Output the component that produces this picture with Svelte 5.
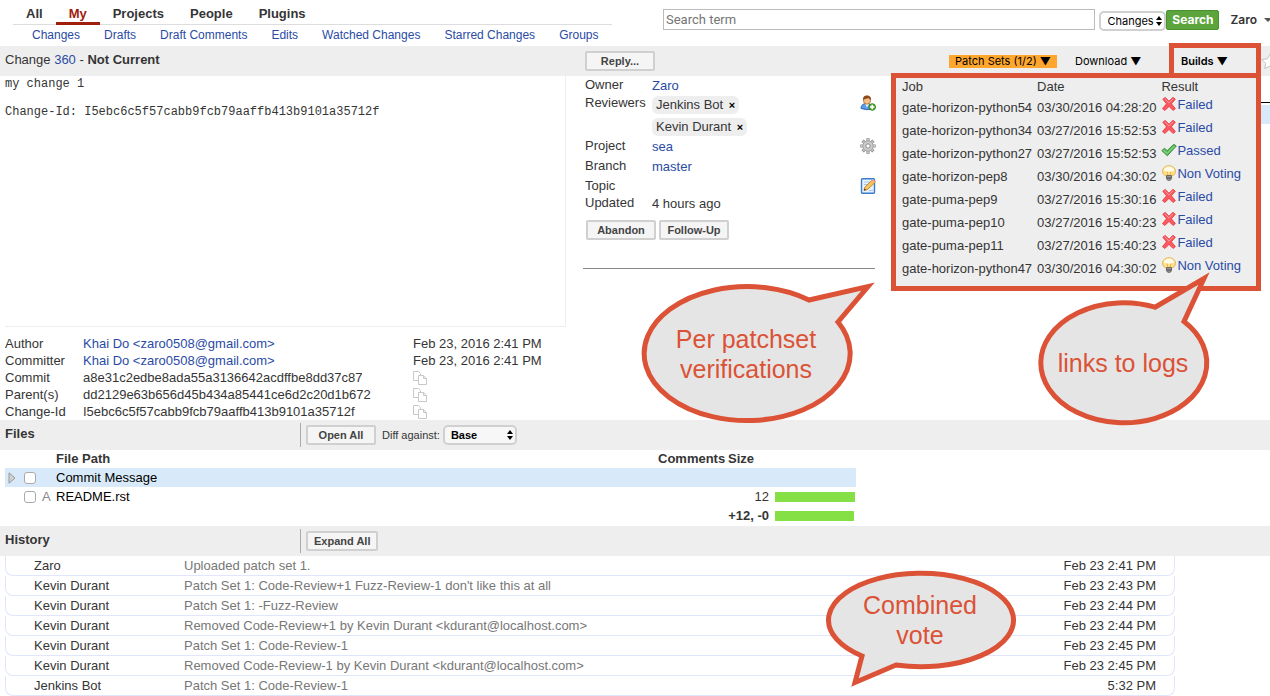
<script>
  const tabs = ['All', 'My', 'Projects', 'People', 'Plugins'];
  const links = ['Changes', 'Drafts', 'Draft Comments', 'Edits', 'Watched Changes', 'Starred Changes', 'Groups'];
  const commit = [
    { label: 'Author', value: 'Khai Do <zaro0508@gmail.com>', date: 'Feb 23, 2016 2:41 PM' },
    { label: 'Committer', value: 'Khai Do <zaro0508@gmail.com>', date: 'Feb 23, 2016 2:41 PM' },
    { label: 'Commit', value: 'a8e31c2edbe8ada55a3136642acdffbe8dd37c87' },
    { label: 'Parent(s)', value: 'dd2129e63b656d45b434a85441ce6d2c20d1b672' },
    { label: 'Change-Id', value: 'I5ebc6c5f57cabb9fcb79aaffb413b9101a35712f' }
  ];
  const builds = [
    { job: 'gate-horizon-python54', date: '03/30/2016 04:28:20', result: 'Failed' },
    { job: 'gate-horizon-python34', date: '03/27/2016 15:52:53', result: 'Failed' },
    { job: 'gate-horizon-python27', date: '03/27/2016 15:52:53', result: 'Passed' },
    { job: 'gate-horizon-pep8', date: '03/30/2016 04:30:02', result: 'Non Voting' },
    { job: 'gate-puma-pep9', date: '03/27/2016 15:30:16', result: 'Failed' },
    { job: 'gate-puma-pep10', date: '03/27/2016 15:40:23', result: 'Failed' },
    { job: 'gate-puma-pep11', date: '03/27/2016 15:40:23', result: 'Failed' },
    { job: 'gate-horizon-python47', date: '03/30/2016 04:30:02', result: 'Non Voting' }
  ];
  const history = [
    { who: 'Zaro', text: 'Uploaded patch set 1.', date: 'Feb 23 2:41 PM' },
    { who: 'Kevin Durant', text: "Patch Set 1: Code-Review+1 Fuzz-Review-1 don't like this at all", date: 'Feb 23 2:43 PM' },
    { who: 'Kevin Durant', text: 'Patch Set 1: -Fuzz-Review', date: 'Feb 23 2:44 PM' },
    { who: 'Kevin Durant', text: 'Removed Code-Review+1 by Kevin Durant <kdurant@localhost.com>', date: 'Feb 23 2:44 PM' },
    { who: 'Kevin Durant', text: 'Patch Set 1: Code-Review-1', date: 'Feb 23 2:45 PM' },
    { who: 'Kevin Durant', text: 'Removed Code-Review-1 by Kevin Durant <kdurant@localhost.com>', date: 'Feb 23 2:45 PM' },
    { who: 'Jenkins Bot', text: 'Patch Set 1: Code-Review-1', date: '5:32 PM' }
  ];
  const message = 'my change 1\n\nChange-Id: I5ebc6c5f57cabb9fcb79aaffb413b9101a35712f';
</script>

{#snippet updown()}
  <svg class="updown" width="6" height="10" viewBox="0 0 6 10" aria-hidden="true">
    <path d="M3 0 6 4H0ZM0 6h6L3 10Z" fill="#000" />
  </svg>
{/snippet}

{#snippet resultIcon(result)}
  {#if result === 'Failed'}
    <svg width="16" height="16" viewBox="0 0 16 16" aria-hidden="true">
      <path d="M1.8 3.2 4.2 1.4 8 5.2 12 1.3l2.3 1.9L10.4 7.8l4 4.8-2.3 1.9-4.1-4.1-4.1 4.1-2.4-1.9 4-4.8Z" fill="#fb5a60" stroke="#e5313b" stroke-width=".8" stroke-linejoin="round" />
      <path d="m3.8 2.8 4.1 4.1L12.2 2.800" fill="none" stroke="#ff9a9a" stroke-width="1" />
    </svg>
  {:else if result === 'Passed'}
    <svg width="16" height="16" viewBox="0 0 16 16" aria-hidden="true">
      <path d="M.8 8.6 3.6 6.2 6.1 8.700 12.8 2.300 15.300 4 6.3 13.8Z" fill="#5cb85a" stroke="#2e8b3a" stroke-width=".9" stroke-linejoin="round" />
      <path d="m2.4 8.4 3.8 3L13.4 4" fill="none" stroke="#9be08f" stroke-width="1" />
    </svg>
  {:else}
    <svg width="16" height="16" viewBox="0 0 16 16" aria-hidden="true">
      <ellipse cx="8" cy="6.2" rx="6.5" ry="5.500" fill="#ffe08c" stroke="#dfb04a" stroke-width=".9" />
      <path d="M2.800 5.500a5.200 4 0 0 1 10.400 0Q8 8 2.800 5.500Z" fill="#fffbe6" />
      <path d="m6 6.500 1 4h2l1-4" fill="none" stroke="#e3a83c" stroke-width=".8" />
      <path d="M5.500 10.500h5v3.200l-1.200 1.600H6.700l-1.200-1.600Z" fill="#b7b7b7" stroke="#555" stroke-width=".8" />
      <path d="M5.500 12.200h5M6 13.800h4" stroke="#444" stroke-width=".9" />
    </svg>
  {/if}
{/snippet}

<div class="page">
  <header class="top">
    <nav>
      <div class="tabs">
        {#each tabs as tab}<a href="#{tab}" class:active={tab === 'My'}>{tab}</a>{/each}
      </div>
      <div class="links">
        {#each links as link}<a href="#{link}">{link}</a>{/each}
      </div>
    </nav>
    <form class="search">
      <input type="text" placeholder="Search term" aria-label="Search term" />
      <span class="select scope">
        <select aria-label="Search in"><option>Changes</option></select>
        {@render updown()}
      </span>
      <button type="button" class="go">Search</button>
      <a class="user" href="#account">Zaro</a>
      <svg width="6" height="6" viewBox="0 0 6 6" aria-hidden="true"><path d="M0 1h8L4 5Z" fill="#555" /></svg>
    </form>
  </header>

  <div class="bar title">
    <h1>Change <a href="#360">360</a> - <b>Not Current</b></h1>
    <div class="reply"><button class="btn">Reply...</button></div>
    <div class="menus">
      <button class="menu sets">Patch Sets (1/2) ▼</button>
      <button class="menu download">Download ▼</button>
      <div class="builds-wrap">
        <button class="menu builds">Builds ▼</button>
        <div class="popup">
          <table>
            <thead><tr><th>Job</th><th>Date</th><th>Result</th></tr></thead>
            <tbody>
              {#each builds as b}
                <tr>
                  <td>{b.job}</td>
                  <td>{b.date}</td>
                  <td><div class="result">{@render resultIcon(b.result)}<a href="#log">{b.result}</a></div></td>
                </tr>
              {/each}
            </tbody>
          </table>
        </div>
      </div>
      <svg width="9" height="16" viewBox="0 0 9 16" aria-hidden="true">
        <path d="M9 1 6.5 5.8.7 6.5l4 4L3.6 15.5 9 13" fill="#fff" stroke="#c4c4c4" />
      </svg>
    </div>
  </div>

  <main class="change">
    <section>
      <pre>{message}</pre>
      <dl class="commit">
        {#each commit as c}
          <div>
            <dt>{c.label}</dt>
            <dd>{#if c.date}<a href="#person">{c.value}</a>{:else}{c.value}{/if}</dd>
            <dd>
              {#if c.date}{c.date}{:else}
                <svg width="14" height="14" viewBox="0 0 14 14" aria-label="Copy">
                  <path d="M.5.5h5l2 2v7h-7Z" fill="#fff" stroke="#c8c8c8" />
                  <path d="M5.5 4.5h5l3 3v6h-8Z" fill="#fff" stroke="#c8c8c8" />
                  <path d="M10.5 4.5v3h3" fill="none" stroke="#c8c8c8" />
                </svg>
              {/if}
            </dd>
          </div>
        {/each}
      </dl>
    </section>

    <section class="info">
      <div class="row owner"><span>Owner</span><span class="val"><a href="#zaro">Zaro</a></span></div>
      <div class="row reviewers">
        <span>Reviewers</span>
        <span class="chips">
          <span class="chip">Jenkins Bot <button aria-label="Remove Jenkins Bot">×</button></span>
          <span class="chip">Kevin Durant <button aria-label="Remove Kevin Durant">×</button></span>
        </span>
        <svg width="16" height="16" viewBox="0 0 16 16" aria-hidden="true">
          <path d="M1 13.5C1 9.8 3.7 8.5 7 8.5s5 2 5 5.5q-5 1.500-11-.5Z" fill="#5d9ce8" stroke="#2f66b5" />
          <path d="M5.3 9 7 12.5 9 9Z" fill="#eef6ff" />
          <ellipse cx="7" cy="5.2" rx="3.6" ry="4" fill="#f3c08c" stroke="#a86b33" stroke-width=".8" />
          <path d="M3.2 5C2.6 1.8 4.6.4 7.1.4S11.4 2 10.8 5C9.4 4.6 9 3.4 8.6 3 7.4 4 5 3.6 3.2 5Z" fill="#8d4a1c" />
          <circle cx="12.200" cy="12" r="3.3" fill="#58ad3a" stroke="#2f7d1e" stroke-width=".9" />
          <path d="M12.200 9.8v4.4M10 12h4.4" stroke="#fff" stroke-width="1.5" />
        </svg>
      </div>
      <div class="row wide">
        <span>Project</span><span class="val"><a href="#sea">sea</a></span>
        <svg width="16" height="16" viewBox="0 0 16 16" aria-hidden="true">
          <g stroke="#8a8a8a" stroke-width="3.2"><path d="M8 .3v15.4M.3 8h15.4M2.6 2.6l10.8 10.8M13.4 2.6 2.6 13.4" /></g>
          <g stroke="#c9c9c9" stroke-width="2"><path d="M8 1v14M1 8h14M3.1 3.1l9.8 9.8M12.9 3.1l-9.8 9.8" /></g>
          <circle cx="8" cy="8" r="5.2" fill="#ccc" stroke="#999" stroke-width=".8" />
          <circle cx="8" cy="8" r="2.2" fill="#fff" stroke="#8a8a8a" />
        </svg>
      </div>
      <div class="row wide"><span>Branch</span><span class="val"><a href="#master">master</a></span></div>
      <div class="row topic">
        <span>Topic</span><span></span>
        <svg width="16" height="16" viewBox="0 0 16 16" aria-hidden="true">
          <rect x="1.5" y=".8" width="13" height="14.4" rx="1" fill="#e6f2ff" stroke="#3b7cc9" stroke-width="1.4" />
          <path d="M4 4h6M4 6.5h4M9 12.5h4" stroke="#a5c8ee" />
          <path d="m4 12.5.8-3.4 7-6.7q1.8-.8 3.2 2l-7.3 7Z" fill="#f6c45c" stroke="#b57a22" stroke-width=".8" />
          <path d="m4 12.5.5-2 1.7 1.5Z" fill="#333" />
          <path d="m11.8 2.4 3 2.3 1-1.2-2.4-2.2Z" fill="#ef9a86" />
        </svg>
      </div>
      <div class="row wide"><span>Updated</span><span class="val">4 hours ago</span></div>
      <div class="actions"><button class="btn">Abandon</button><button class="btn">Follow-Up</button></div>
      <hr />
    </section>

    <aside><div class="line"></div><div class="selected"></div></aside>
  </main>

  <div class="bar">
    <h2>Files</h2>
    <div class="tools">
      <button class="btn">Open All</button>
      <label for="base">Diff against:</label>
      <span class="select base"><select id="base"><option>Base</option></select>{@render updown()}</span>
    </div>
  </div>

  <table class="files">
    <colgroup><col class="c1" /><col class="c2" /><col class="c3" /><col /><col class="c5" /><col class="c6" /><col class="c7" /></colgroup>
    <thead>
      <tr><th></th><th></th><th></th><th>File Path</th><th>Comments</th><th>Size</th><th></th></tr>
    </thead>
    <tbody>
      <tr class="on">
        <td><svg width="8" height="12" viewBox="0 0 8 12" aria-hidden="true"><path d="M1 .8 7 6 1 11.2Z" fill="#d0d0d0" stroke="#999" /></svg></td>
        <td><input type="checkbox" aria-label="Reviewed: Commit Message" /></td>
        <td></td><td>Commit Message</td><td></td><td></td><td></td>
      </tr>
      <tr>
        <td></td>
        <td><input type="checkbox" aria-label="Reviewed: README.rst" /></td>
        <td class="status">A</td><td>README.rst</td><td></td><td class="num">12</td><td><div class="size"></div></td>
      </tr>
      <tr><td></td><td></td><td></td><td></td><td class="num total" colspan="2">+12, -0</td><td><div class="size short"></div></td></tr>
    </tbody>
  </table>

  <div class="bar">
    <h2>History</h2>
    <div class="tools"><button class="btn">Expand All</button></div>
  </div>

  <ul class="history">
    {#each history as h}
      <li><span>{h.who}</span><span class="text">{h.text}</span><time>{h.date}</time></li>
    {/each}
  </ul>

  <svg class="callout patchset" width="240" height="150" viewBox="640 276 240 150">
    <path d="M838 322A103 67 0 1 1 809 300L868 286.5Z" />
    <text x="746" y="348">Per patchset</text>
    <text x="746" y="378">verifications</text>
  </svg>
  <svg class="callout logs" width="180" height="160" viewBox="1034 268 180 160">
    <path d="M1184 321.5A83 60 0 1 1 1155 307.2L1204 278.5Z" />
    <text x="1123" y="372">links to logs</text>
  </svg>
  <svg class="callout vote" width="200" height="124" viewBox="822 568 200 124">
    <path d="M862 656A92.5 46.7 0 1 1 896 665L855 682.5Z" />
    <text x="920" y="614">Combined</text>
    <text x="920" y="644">vote</text>
  </svg>
</div>

<style>
  :global(body) { margin: 0; background: #fff; }
  .page {
    position: relative;
    overflow: hidden;
    color: #353535;
    font: 13px/17px "Liberation Sans", Arial, sans-serif;
  }
  a { color: #2a4ba5; text-decoration: none; }
  svg { display: block; flex: none; }
  button { font-family: inherit; color: inherit; margin: 0; cursor: pointer; }

  .top { display: flex; height: 46px; justify-content: space-between; }
  nav { margin-left: 13px; flex: 0 0 599px; }
  .tabs { display: flex; height: 25px; box-sizing: border-box; border-bottom: 1px solid #ddd; margin-bottom: 2px; }
  .tabs a { padding: 5px 13px 0; font-weight: bold; color: #353535; height: 17px; }
  .tabs a.active { color: #a0200c; border-bottom: 3px solid #a0200c; }
  .links { display: flex; gap: 24px; padding-left: 19px; font-size: 12px; line-height: 16px; white-space: nowrap; }
  .search { display: flex; flex: 1; align-items: center; margin-left: 51px; height: 39px; font-family: Roboto, sans-serif; }
  .search input {
    flex: 1; min-width: 0; height: 21px; box-sizing: border-box; padding: 0 2px;
    border: 1px solid #bbb; font: 13px Roboto, sans-serif; margin-right: 4px;
  }
  .search input::placeholder { color: #757575; opacity: 1; }
  .select { display: inline-grid; align-items: center; }
  .select select, .select :global(svg) { grid-area: 1 / 1; }
  .select :global(svg) { justify-self: end; margin-right: 4px; pointer-events: none; }
  select {
    appearance: none; box-sizing: border-box; height: 20px; width: 100%; padding: 0 8px; border: 2px solid #d0d0d0;
    border-radius: 5px; background: #f7f7f7; color: #000; font: 11px Inter, sans-serif;
  }
  .scope { width: 67px; margin-top: 3px; }
  .scope select { background: #fff; padding: 0 6px; }
  .go {
    width: 53px; height: 20px; padding: 0; border: 1px solid #4a8f30; border-radius: 2px; background: #5ba53c;
    color: #fff; font: bold 12px Inter, sans-serif;
  }
  .user { margin: 0 7px 0 11px; font: 600 12px Inter, sans-serif; color: #353535; }

  .bar { display: flex; align-items: center; height: 30px; background: #eee; }
  h1, h2 { margin: 0; font-size: 13px; font-weight: normal; line-height: 16px; padding-bottom: 2px; }
  h2 { width: 295px; padding-left: 5px; font-weight: bold; }
  .title h1 { flex: 0 0 580px; padding-left: 5px; }
  .btn {
    height: 20px; min-width: 70px; padding: 0 6px; border: 2px solid #d0d0d0; border-radius: 2px; background: #f5f5f5;
    color: #444; font: bold 11px "Liberation Sans", Arial, sans-serif;
  }
  .tools { display: flex; align-items: center; height: 24px; padding-left: 5px; border-left: 1px solid #aaa; font-size: 11px; }
  .tools label { margin: 0 3px 0 6px; }
  .base { width: 74px; }
  .base select { font: bold 11px "Liberation Sans", Arial, sans-serif; padding: 0 6px; }

  .menus { display: flex; align-items: center; margin-left: auto; height: 30px; }
  .menu { border: 0; padding: 0; background: none; color: #000; font: 11px/13px Inter, sans-serif; white-space: nowrap; }
  .sets { background: #ffa62f; width: 108px; margin-right: 18px; }
  .download { width: 64px; margin-right: 30px; text-align: left; }
  .builds-wrap { position: relative; width: 92px; }
  .builds {
    width: 92px; height: 36px; box-sizing: border-box; border: 5px solid #dc5236; font-weight: 600;
    padding: 0 17px 0 7px; display: block; text-align: left;
  }
  .popup {
    position: absolute; top: 30px; right: 0; width: 370px; box-sizing: border-box; padding: 0 4px 6px;
    border: 5px solid #dc5236; background: #eee; z-index: 2;
  }
  .popup table { border-collapse: collapse; }
  .popup th, .popup td { padding: 0 3px 0 2px; font-weight: normal; text-align: left; white-space: nowrap; vertical-align: top; }
  .popup th { height: 18px; line-height: 18px; }
  .popup td { height: 23px; line-height: 23px; }
  .result { display: flex; height: 18px; line-height: 18px; }

  .change { display: grid; grid-template-columns: 566px 292px minmax(0, 1fr); column-gap: 17px; }
  pre {
    height: 251px; box-sizing: border-box; margin: 0 0 0 5px; padding: 1px 0 0; border: solid #eee; border-width: 0 1px 1px 0;
    font: 12px/14px "Liberation Mono", monospace;
  }
  .commit { margin: 8px 0 0; padding: 0 0 0 5px; }
  .commit div { display: grid; grid-template-columns: 78px 330px 1fr; height: 17px; align-items: center; }
  dd { margin: 0; }
  .info { padding-bottom: 20px; }
  .row { display: grid; grid-template-columns: 67px 1fr 15px; padding-left: 2px; }
  .row.owner { height: 18px; }
  .row svg { margin-top: 1px; }
  .reviewers { height: 43px; }
  .wide { height: 20px; }
  .topic { height: 17px; }
  .val { padding-top: 1px; }
  .chips { display: flex; flex-direction: column; align-items: flex-start; gap: 4px; padding-top: 2px; }
  .chip { height: 18px; line-height: 18px; padding: 0 4px; border-radius: 6px; background: #eee; white-space: nowrap; }
  .chip button { border: 0; padding: 0 0 0 2px; background: none; color: #000; font-size: 11px; font-weight: bold; }
  .actions { display: flex; gap: 3px; padding: 6px 0 0 3px; }
  hr { margin: 28px 0 0; border: 0; border-top: 1px solid #888; }
  aside { padding-top: 26px; }
  .line { border-top: 1px solid #000; margin-bottom: 2px; }
  .selected { height: 19px; background: #d8eaf9; }

  .files { width: 851px; margin: 0 0 1px 5px; border-collapse: collapse; table-layout: fixed; }
  .files th, .files td { height: 19px; padding: 0; line-height: 18px; text-align: left; }
  .files th { height: 18px; }
  .files td { color: #000; }
  .on { background: #d8eaf9; }
  .c1 { width: 18px; }
  .c2 { width: 17px; }
  .c3 { width: 16px; }
  .c5 { width: 70px; }
  .c6 { width: 41px; }
  .c7 { width: 87px; }
  .files td:first-child svg { margin-left: 3px; }
  .files input {
    appearance: none; display: block; width: 12px; height: 12px; margin: 0 0 0 1px; box-sizing: border-box;
    border: 1px solid #aaa; border-radius: 3px; background: #fff;
  }
  .files .status { color: #888; padding-left: 2px; }
  .files .num { text-align: right; color: #353535; }
  .files .total { font-weight: bold; }
  .size { height: 10px; width: 80px; margin-left: 6px; background: #85e045; }
  .short { width: 79px; }

  .history { list-style: none; margin: 0 95px 0 5px; padding: 0; }
  .history li {
    display: grid; grid-template-columns: 150px 1fr auto; height: 20px; box-sizing: border-box; line-height: 19px;
    padding: 0 18px 0 28px; border: solid #e0e6fb; border-width: 0 1px 1px; border-radius: 0 0 8px 8px;
  }
  .history .text { color: #777; }

  .callout { position: absolute; z-index: 3; pointer-events: none; }
  .callout path { fill: #e5e5e5; stroke: #dc5236; stroke-width: 5px; stroke-miterlimit: 12; }
  .callout text { fill: #dc5236; font-size: 25px; text-anchor: middle; }
  .patchset { left: 640px; top: 276px; }
  .logs { right: 56px; top: 268px; }
  .vote { left: 822px; top: 568px; }
</style>
